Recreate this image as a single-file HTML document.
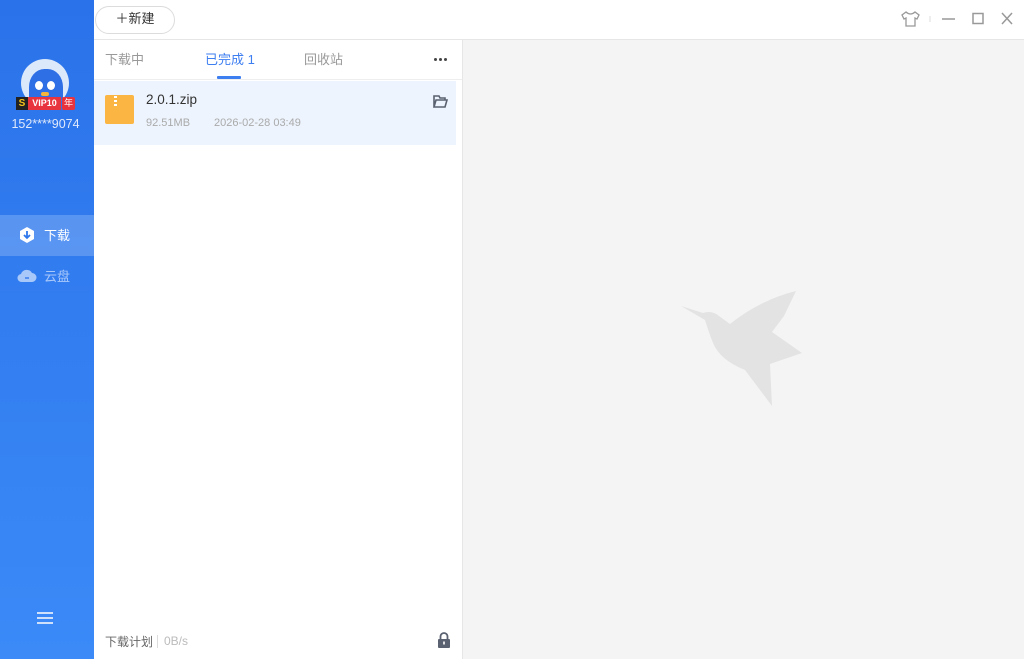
<!DOCTYPE html>
<html><head><meta charset="utf-8"><style>
*{margin:0;padding:0;box-sizing:border-box}
body{width:1024px;height:659px;overflow:hidden;font-family:"Liberation Sans","Noto Sans CJK SC",sans-serif;background:#fff;position:relative}
.side{position:absolute;left:0;top:0;width:94px;height:659px;background:linear-gradient(#2a72e9,#3b8af8)}
.abs{position:absolute}
.dot{position:absolute;width:3px;height:3px;border-radius:50%;background:#444}
</style></head><body>
<div class="side">
  <div class="abs" style="left:21px;top:59px;width:48px;height:48px;border-radius:50%;background:#dbe9fb;overflow:hidden">
    <div class="abs" style="left:8px;top:10px;width:34px;height:40px;border-radius:45% 45% 30% 30%;background:#2e6fe6"></div>
    <div class="abs" style="left:14px;top:22px;width:8px;height:9px;border-radius:50%;background:#fff"></div>
    <div class="abs" style="left:26px;top:22px;width:8px;height:9px;border-radius:50%;background:#fff"></div>
    <div class="abs" style="left:20px;top:33px;width:8px;height:4px;border-radius:2px;background:#f5b43a"></div>
  </div>
  <div class="abs" style="left:16px;top:97px;width:12px;height:13px;background:#222;color:#f5c518;font-size:10px;font-weight:bold;text-align:center;line-height:13px">S</div>
  <div class="abs" style="left:28px;top:97px;width:33px;height:13px;background:#e8343f;color:#fff;font-size:9px;font-weight:bold;text-align:center;line-height:13px">VIP10</div>
  <div class="abs" style="left:62px;top:97px;width:13px;height:13px;background:#e8343f;color:#fff;font-size:9px;text-align:center;line-height:13px;border-radius:2px">年</div>
  <div class="abs" style="left:0;top:117px;width:91px;text-align:center;color:#dfe9fb;font-size:12.5px">152****9074</div>
  <div class="abs" style="left:0;top:215px;width:94px;height:41px;background:rgba(255,255,255,0.2)"></div>
  <svg class="abs" style="left:18px;top:226px" width="18" height="18" viewBox="0 0 18 18"><path d="M9 1L16 5V13L9 17L2 13V5Z" fill="#fff"/><path d="M9 5V11M6 9L9 12L12 9" stroke="#2f78ec" stroke-width="1.8" fill="none"/></svg>
  <div class="abs" style="left:44px;top:225px;color:#fff;font-size:13px">下载</div>
  <svg class="abs" style="left:17px;top:268px" width="20" height="15" viewBox="0 0 20 15"><path d="M5 14H15A4.5 4.5 0 0 0 15 5A6 6 0 0 0 4 6A4 4 0 0 0 5 14Z" fill="#a9c8fa"/><path d="M8 10H12" stroke="#3a7fef" stroke-width="1.5"/></svg>
  <div class="abs" style="left:44px;top:266px;color:#a9c8fa;font-size:13px">云盘</div>
  <div class="abs" style="left:37px;top:612px;width:16px;height:2px;background:#cfe0fb;box-shadow:0 5px 0 #cfe0fb,0 10px 0 #cfe0fb"></div>
</div>
<div class="abs" style="left:94px;top:39px;width:930px;height:1px;background:#e6e6e6"></div>
<div class="abs" style="left:95px;top:6px;width:80px;height:28px;border:1px solid #dcdcdc;border-radius:14px;font-size:13px;color:#333;text-align:center;line-height:24px">＋新建</div>
<svg class="abs" style="left:900px;top:9px" width="120" height="20" viewBox="0 0 120 20"><path d="M6 3L2 6L4 10L6 9V17H15V9L17 10L19 6L15 3Q10.5 7 6 3Z" fill="none" stroke="#999" stroke-width="1.3"/><path d="M30 7V13" stroke="#ddd"/><path d="M42 10H55" stroke="#999" stroke-width="1.5"/><rect x="73" y="4.5" width="10" height="10" fill="none" stroke="#999" stroke-width="1.5"/><path d="M102 4L112 15M112 4L102 15" stroke="#999" stroke-width="1.5"/></svg>
<div class="abs" style="left:463px;top:40px;width:561px;height:619px;background:#f4f4f4"></div>
<div class="abs" style="left:462px;top:40px;width:1px;height:619px;background:#e6e6e6"></div>
<div class="abs" style="left:105px;top:49px;font-size:13px;color:#999">下载中</div>
<div class="abs" style="left:205px;top:49px;font-size:13px;color:#3d7ef0">已完成 1</div>
<div class="abs" style="left:217px;top:76px;width:24px;height:3px;background:#3d7ef0;border-radius:1px"></div>
<div class="abs" style="left:304px;top:49px;font-size:13px;color:#999">回收站</div>
<div class="dot" style="left:434px;top:58px"></div><div class="dot" style="left:439px;top:58px"></div><div class="dot" style="left:444px;top:58px"></div>
<div class="abs" style="left:94px;top:79px;width:368px;height:1px;background:#eee"></div>
<div class="abs" style="left:94px;top:81px;width:362px;height:64px;background:#edf4fd"></div>
<div class="abs" style="left:105px;top:95px;width:29px;height:29px;background:#fbb542;border-radius:2px"></div>
<div class="abs" style="left:114px;top:96px;width:3px;height:12px;background:repeating-linear-gradient(#fff 0 2px,transparent 2px 4px)"></div>
<div class="abs" style="left:146px;top:92px;font-size:13.5px;color:#333">2.0.1.zip</div>
<div class="abs" style="left:146px;top:117px;font-size:11px;color:#aaa">92.51MB</div>
<div class="abs" style="left:214px;top:117px;font-size:11px;color:#aaa">2026-02-28 03:49</div>
<svg class="abs" style="left:433px;top:95px" width="15" height="13" viewBox="0 0 15 13"><path d="M1 12V1H6L7 3H12V5M1 12H12L14 5H3Z" fill="none" stroke="#5a6170" stroke-width="1.6"/></svg>
<div class="abs" style="left:105px;top:633px;font-size:12px;color:#666">下载计划</div>
<div class="abs" style="left:157px;top:635px;width:1px;height:13px;background:#ddd"></div>
<div class="abs" style="left:164px;top:634px;font-size:12px;color:#bbb">0B/s</div>
<svg class="abs" style="left:437px;top:632px" width="14" height="16" viewBox="0 0 14 16"><path d="M3.5 7V4.5A3.5 3.5 0 0 1 10.5 4.5V7" fill="none" stroke="#5a6170" stroke-width="1.8"/><rect x="1" y="7" width="12" height="9" rx="1" fill="#5a6170"/><rect x="6.2" y="9.5" width="1.6" height="3" fill="#fff"/></svg>
<svg class="abs" style="left:670px;top:280px" width="140" height="130" viewBox="670 280 140 130"><path d="M681 306L703 313Q712 310 719 316L730 324Q760 300 796 291L784 316L772 332L802 353L770 364L772 406L745 370Q720 360 713 343Q708 330 705 320Z" fill="#e3e3e3"/></svg>
</body></html>
